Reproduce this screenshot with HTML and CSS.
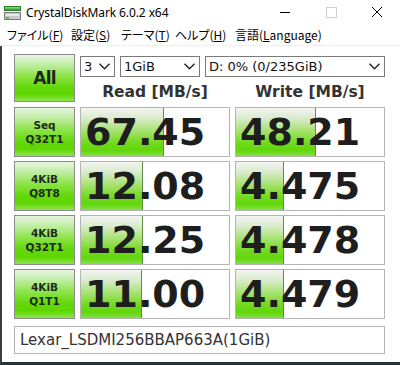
FILE: index.html
```html
<!DOCTYPE html>
<html lang="ja">
<head>
<meta charset="utf-8">
<title>CrystalDiskMark</title>
<link rel="stylesheet" href="styles.css">
</head>
<body>
<div class="window">
  <div class="titlebar">
    <svg class="appicon" width="17" height="14" viewBox="0 0 17 14">
      <rect x="0.5" y="0.5" width="16" height="4" fill="#3fa63f" stroke="#2e7d2e"/>
      <rect x="1" y="1" width="15" height="1.5" fill="#7fd07f"/>
      <rect x="0.5" y="6.5" width="16" height="7" fill="#c9c9c9" stroke="#7a7a7a"/>
      <rect x="2" y="8" width="13" height="2" fill="#e8e8e8"/>
      <rect x="2" y="11" width="3" height="1.5" fill="#3fa63f"/>
    </svg>
    <span class="title">CrystalDiskMark 6.0.2 x64</span>
    <div class="controls">
      <svg class="ctl" width="46" height="24" viewBox="0 0 46 24"><line x1="18" y1="12.5" x2="28" y2="12.5" stroke="#000" stroke-width="1"/></svg>
      <svg class="ctl" width="46" height="24" viewBox="0 0 46 24"><rect x="18.5" y="7.5" width="10" height="10" fill="none" stroke="#cfcfcf" stroke-width="1"/></svg>
      <svg class="ctl" width="46" height="24" viewBox="0 0 46 24"><path d="M18 7 L28 17 M28 7 L18 17" stroke="#000" stroke-width="1"/></svg>
    </div>
  </div>
  <div class="menubar">
    <span class="mi m1">ファイル(<u>F</u>)</span>
    <span class="mi m2">設定(<u>S</u>)</span>
    <span class="mi m3">テーマ(<u>T</u>)</span>
    <span class="mi m4">ヘルプ(<u>H</u>)</span>
    <span class="mi m5">言語(<u>L</u>anguage)</span>
  </div>
  <div class="client">
    <div class="grid">
      <div class="btn all">All</div>
      <div class="topright">
        <div class="selects">
          <div class="sel s-count"><span>3</span><svg class="chev" width="11" height="7" viewBox="0 0 11 7"><polyline points="0.5,0.8 5.5,5.8 10.5,0.8" fill="none" stroke="#222" stroke-width="1.4"/></svg></div>
          <div class="sel s-size"><span>1GiB</span><svg class="chev" width="11" height="7" viewBox="0 0 11 7"><polyline points="0.5,0.8 5.5,5.8 10.5,0.8" fill="none" stroke="#222" stroke-width="1.4"/></svg></div>
          <div class="sel s-drive"><span>D: 0% (0/235GiB)</span><svg class="chev" width="11" height="7" viewBox="0 0 11 7"><polyline points="0.5,0.8 5.5,5.8 10.5,0.8" fill="none" stroke="#222" stroke-width="1.4"/></svg></div>
        </div>
        <div class="heads">
          <div class="head">Read [MB/s]</div>
          <div class="head">Write [MB/s]</div>
        </div>
      </div>

      <div class="btn lbl">Seq<br>Q32T1</div>
      <div class="val"><div class="bar" style="width:83px"></div><span class="num">67.45</span></div>
      <div class="val"><div class="bar" style="width:80px"></div><span class="num">48.21</span></div>

      <div class="btn lbl">4KiB<br>Q8T8</div>
      <div class="val"><div class="bar" style="width:62px"></div><span class="num">12.08</span></div>
      <div class="val"><div class="bar" style="width:48px"></div><span class="num">4.475</span></div>

      <div class="btn lbl">4KiB<br>Q32T1</div>
      <div class="val"><div class="bar" style="width:62px"></div><span class="num">12.25</span></div>
      <div class="val"><div class="bar" style="width:48px"></div><span class="num">4.478</span></div>

      <div class="btn lbl">4KiB<br>Q1T1</div>
      <div class="val"><div class="bar" style="width:61px"></div><span class="num">11.00</span></div>
      <div class="val"><div class="bar" style="width:48px"></div><span class="num">4.479</span></div>
    </div>
    <div class="name">Lexar_LSDMI256BBAP663A(1GiB)</div>
  </div>
</div>
</body>
</html>
```
FILE: styles.css
```css
* { box-sizing: border-box; }
html, body { margin: 0; padding: 0; }
body {
  width: 400px;
  height: 365px;
  overflow: hidden;
  background: #ffffff;
  font-family: "Noto Sans", "Noto Sans CJK JP", sans-serif;
}
.window {
  width: 400px;
  height: 365px;
  display: flex;
  flex-direction: column;
  background: #ffffff;
}
.titlebar {
  height: 24px;
  display: flex;
  align-items: center;
  position: relative;
}
.appicon {
  margin-left: 4px;
  margin-top: 1px;
}
.title {
  margin-left: 5px;
  font-size: 12px;
  color: #000;
  letter-spacing: -0.1px;
}
.controls {
  margin-left: auto;
  display: flex;
}
.ctl { display: block; }

.menubar {
  height: 22px;
  display: flex;
  align-items: center;
  border-bottom: 1px solid #f0f0f0;
  font-family: "Noto Sans CJK JP", "Noto Sans", sans-serif;
  font-feature-settings: "palt";
  font-size: 12px;
  color: #000;
}
.mi { white-space: nowrap; }
.mi u { text-underline-offset: 1px; }
.m1 { margin-left: 7px; width: 64px; }
.m2 { width: 50px; }
.m3 { width: 54px; }
.m4 { width: 60px; }

.client {
  flex: 1;
  border-left: 2px solid #3c3f41;
  border-bottom: 3px solid #23343b;
  padding: 8px 0 0 12px;
}
.grid {
  display: grid;
  grid-template-columns: 61px 150px 150px;
  grid-template-rows: 49px 50px 50px 50px 50px;
  column-gap: 5px;
  row-gap: 4px;
}
.btn {
  border: 1px solid #8c8c8c;
  background: linear-gradient(to bottom, #e6f6df 0%, #c6eeae 18%, #8ee44a 45%, #64d80a 70%, #5ed600 85%, #8fe450 100%);
  display: flex;
  align-items: center;
  justify-content: center;
  text-align: center;
  font-family: "DejaVu Sans", sans-serif;
  font-weight: bold;
  color: #1f2a1f;
}
.all {
  height: 48px;
  font-size: 17px;
  letter-spacing: -0.8px;
}
.lbl {
  font-size: 10.5px;
  line-height: 14px;
}
.topright {
  grid-column: 2 / 4;
  display: flex;
  flex-direction: column;
}
.selects {
  display: flex;
  gap: 5px;
  margin-top: 2px;
  height: 21px;
}
.sel {
  height: 21px;
  border: 1px solid #7a7a7a;
  background: #fff;
  display: flex;
  align-items: center;
  padding-left: 3px;
  padding-right: 4px;
  font-family: "DejaVu Sans", sans-serif;
  font-size: 13px;
  color: #111;
}
.sel .chev { margin-left: auto; }
.s-count { width: 35px; }
.s-size { width: 80px; }
.s-drive { width: 180px; }
.heads {
  display: flex;
  gap: 5px;
  margin-top: 4px;
}
.head {
  width: 150px;
  text-align: center;
  font-family: "DejaVu Sans", sans-serif;
  font-weight: bold;
  font-size: 15.5px;
  line-height: 22px;
  color: #333;
}
.val {
  position: relative;
  border: 1px solid #b4b4b4;
  background: #fff;
  display: flex;
  align-items: center;
  overflow: hidden;
}
.bar {
  position: absolute;
  left: 0;
  top: 0;
  bottom: 0;
  background: linear-gradient(to bottom, #f2f4f0 0%, #dcecd0 20%, #a6e26e 48%, #72da20 72%, #62d60c 88%, #86e046 100%);
  border-right: 1px solid #5d8f45;
}
.num {
  position: relative;
  margin-left: 4px;
  font-family: "DejaVu Sans", sans-serif;
  font-weight: bold;
  font-size: 38px;
  line-height: 48px;
  color: #1e1e1e;
}
.name {
  margin-top: 7px;
  width: 371px;
  height: 28px;
  border: 1px solid #b4b4b4;
  display: flex;
  align-items: center;
  padding-left: 5px;
  font-family: "DejaVu Sans", sans-serif;
  font-size: 15px;
  color: #333;
}
```
